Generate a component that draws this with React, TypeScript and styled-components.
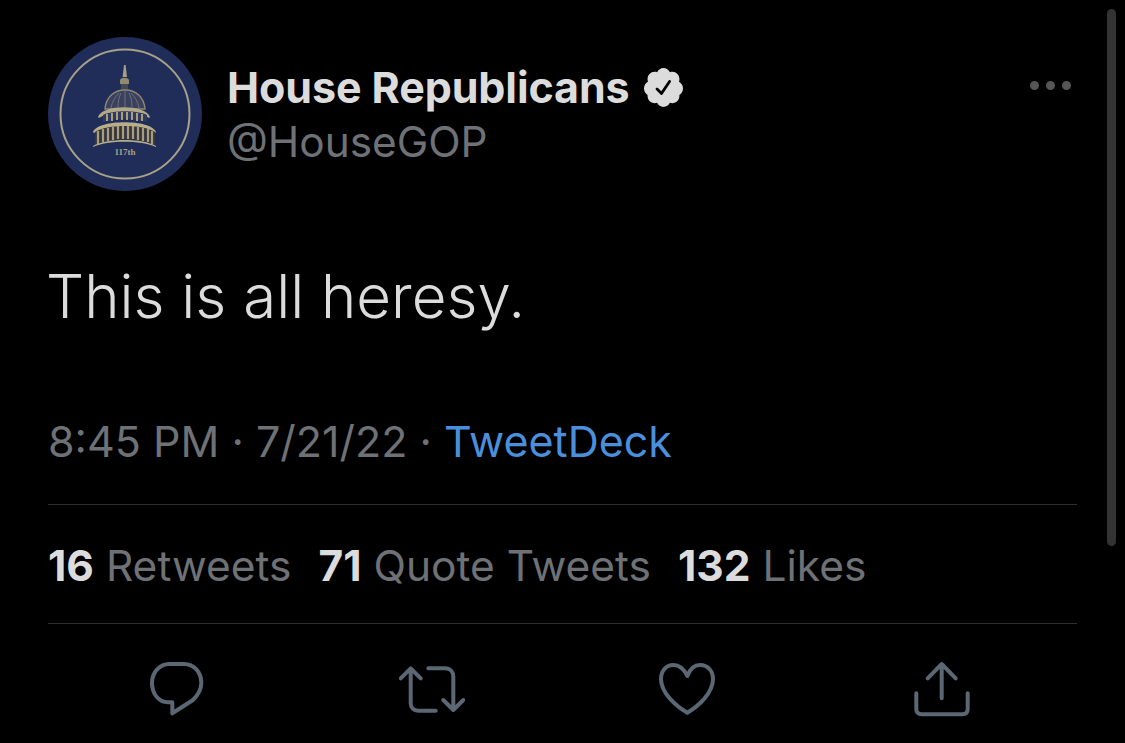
import styled, {createGlobalStyle} from 'styled-components';

const GlobalStyle = createGlobalStyle`
  html, body {
    margin: 0;
    height: 100%;
    background: #000;
    overflow: hidden;
  }
`;

const FONT = `Inter, "Liberation Sans", sans-serif`;

const Avatar = () => (
  <AvatarSvg viewBox="0 0 154 154">
    <circle cx="77" cy="77" r="77" fill="#202d58" />
    <circle cx="77" cy="77" r="64.5" fill="none" stroke="#a8a188" strokeWidth="2" />
    <path d="M76 28h1.600l1.400 12h-4.400z" fill="#a89f84" />
    <path d="M72 43c1-3 8-3 9 0v4h-9z" fill="#94896c" />
    <path d="M73 47h7v6h-7z" fill="#454855" />
    <path d="M57 72c1-12 9-19 20-19s19 7 20 19z" fill="#39415f" stroke="#8f8870" strokeWidth="1.400" />
    <path d="M63 71c1-6 4-11 8-15M70 70c0-6 1-10 3-14M77 70V54M84 70c0-6-1-10-3-14M91 71c-1-6-4-11-8-15" stroke="#6f7076" strokeWidth="1" fill="none" />
    <path d="M50 80c4-13 48-13 52 0l-1 1c-10-7-40-7-50 0z" fill="#b3a988" />
    <path d="M55 78c10-5 34-5 44 0v7c-12-4-32-4-44 0z" fill="#2f3a5c" />
    <path d="M59 77v7M64 76v8M69 75v8M74 75v8M79 75v8M84 75v8M89 76v8M94 77v7" stroke="#a89f80" strokeWidth="2" />
    <path d="M45 95c5-13 58-13 63 0l-1 1c-12-8-49-8-61 0z" fill="#b8ae8a" />
    <path d="M47 95c12-8 48-8 60 0v12c-14-6-46-6-60 0z" fill="#34353f" />
    <path d="M50 94v13M55 92v13M60 91v13M65 90v13M70 89v13M75 89v13M80 89v13M85 89v13M90 90v13M95 91v13M100 92v13M104 94v13" stroke="#a89e7c" strokeWidth="2.200" />
    <path d="M45 109c13-8 50-8 63 0v1c-15-7-48-7-63 0z" fill="#b8ae8a" />
    <AvatarLabel x="77" y="118" textAnchor="middle">117th</AvatarLabel>
  </AvatarSvg>
);

const VerifiedBadge = () => (
  <BadgeSvg viewBox="1.5 1.5 21 21">
    <path d="M22.5 12.5c0-1.58-.875-2.95-2.148-3.6.154-.435.238-.905.238-1.4 0-2.21-1.71-3.998-3.818-3.998-.47 0-.92.084-1.336.25C14.818 2.415 13.51 1.5 12 1.5s-2.816.917-3.437 2.25c-.415-.165-.866-.25-1.336-.25-2.11 0-3.818 1.79-3.818 4 0 .494.083.964.237 1.4-1.272.65-2.147 2.018-2.147 3.6 0 1.495.782 2.798 1.942 3.486-.02.17-.032.34-.032.514 0 2.21 1.708 4 3.818 4 .47 0 .92-.086 1.335-.25.62 1.334 1.926 2.25 3.437 2.25 1.512 0 2.818-.916 3.437-2.25.415.163.865.248 1.336.248 2.11 0 3.818-1.79 3.818-4 0-.174-.012-.344-.033-.513 1.158-.687 1.943-1.99 1.943-3.484zm-6.616-3.334l-4.334 6.5c-.145.217-.382.334-.625.334-.143 0-.288-.04-.416-.126l-.115-.094-2.415-2.415c-.293-.293-.293-.768 0-1.06s.768-.294 1.06 0l1.77 1.767 3.825-5.74c.23-.345.696-.436 1.04-.207.346.23.44.696.21 1.04z" fill="#dcdcdc" />
  </BadgeSvg>
);

const CommentIcon = () => (
  <ActionSvg viewBox="0 0 66 60">
    <path d="M28.300 42.300H24C14 42.300 8 33 8 23 8 12 16 4 25 4H40C50 4 57.300 12 57.300 23 57.300 31 53 36 49 40L28.300 53.300Z" />
  </ActionSvg>
);

const RetweetIcon = () => (
  <ActionSvg viewBox="0 0 66 60">
    <path d="M1.700 18.300 11.700 8.300l10 10M11.700 9v34.300c0 4.500 3 7.400 7.600 7.400h17.400" />
    <path d="M29.300 8.300H46c5 0 8.300 3.400 8.300 8.400V50M44.300 40l10 10 10-10" />
  </ActionSvg>
);

const HeartIcon = () => (
  <ActionSvg viewBox="0 0 66 60">
    <path d="M33.300 16C30 9 25 5 19.300 5 12 5 7 11 7 19 7 33 22 46 33.300 52.700 44.600 46 59 33 59 19 59 11 54 5 46 5 41 5 36 9 33.300 16Z" />
  </ActionSvg>
);

const ShareIcon = () => (
  <ActionSvg viewBox="0 0 66 60">
    <path d="M32.700 38.300V5M18.700 18.300 32.700 4l14 14.300" />
    <path d="M7.300 33.300V49c0 3.500 2 5.300 5.400 5.300h40.600c3.400 0 5.400-1.800 5.400-5.300V33.300" />
  </ActionSvg>
);

const stats = [
  {count: '16', label: 'Retweets'},
  {count: '71', label: 'Quote Tweets'},
  {count: '132', label: 'Likes'},
];

const App = (): JSX.Element => {
  return (
    <Page>
      <GlobalStyle />
      <Header>
        <Avatar />
        <Names>
          <NameRow>
            <DisplayName>House Republicans</DisplayName>
            <VerifiedBadge />
          </NameRow>
          <Handle>@HouseGOP</Handle>
        </Names>
        <MoreButton>
          <Dot />
          <Dot />
          <Dot />
        </MoreButton>
      </Header>
      <Body>This is all heresy.</Body>
      <Meta>
        8:45 PM · 7/21/22 · <SourceLink>TweetDeck</SourceLink>
      </Meta>
      <Stats>
        {stats.map((el) => (
          <Stat key={el.label}>
            <b>{el.count}</b> {el.label}
          </Stat>
        ))}
      </Stats>
      <Actions>
        <CommentIcon />
        <RetweetIcon />
        <HeartIcon />
        <ShareIcon />
      </Actions>
      <ScrollThumb />
    </Page>
  );
};

export default App;

const Page = styled.main`
  position: relative;
  box-sizing: border-box;
  width: 1125px;
  height: 743px;
  padding: 37px 48px 0;
  background: #000;
  font-family: ${FONT};
  overflow: hidden;
`;

const Header = styled.header`
  display: flex;
  align-items: flex-start;
  gap: 25px;
  height: 154px;
`;

const AvatarSvg = styled.svg`
  display: block;
  flex: none;
  width: 154px;
  height: 154px;
`;

const AvatarLabel = styled.text`
  font-family: "Liberation Serif", serif;
  font-size: 9px;
  font-weight: 700;
  fill: #a8a188;
`;

const Names = styled.div`
  flex: 1;
  padding-top: 26px;
`;

const NameRow = styled.div`
  display: flex;
  align-items: center;
  gap: 14px;
  height: 48px;
`;

const DisplayName = styled.span`
  font-size: 43px;
  font-weight: 700;
  letter-spacing: -0.1px;
  color: #dcdcdc;
`;

const BadgeSvg = styled.svg`
  display: block;
  width: 39px;
  height: 39px;
`;

const Handle = styled.div`
  margin-top: 7px;
  font-size: 42.300px;
  line-height: 48px;
  font-weight: 400;
  color: #6e7175;
`;

const MoreButton = styled.div`
  display: flex;
  gap: 7px;
  padding: 44px 6px 0 0;
`;

const Dot = styled.span`
  width: 9px;
  height: 9px;
  border-radius: 50%;
  background: #565656;
`;

const Body = styled.p`
  margin: 69px 0 0 -2px;
  font-size: 60px;
  line-height: 72px;
  font-weight: 300;
  color: #dcdcdc;
`;

const Meta = styled.div`
  margin-top: 85px;
  padding-bottom: 39px;
  font-size: 43px;
  line-height: 48px;
  color: #6e7175;
  border-bottom: 1px solid #2f2f2f;
`;

const SourceLink = styled.span`
  color: #4a8fdc;
`;

const Stats = styled.div`
  display: flex;
  gap: 27px;
  padding: 37px 0 33px;
  border-bottom: 1px solid #2f2f2f;
`;

const Stat = styled.span`
  font-size: 42.500px;
  line-height: 48px;
  color: #6e7175;

  & > b {
    font-weight: 700;
    color: #dcdcdc;
  }
`;

const Actions = styled.div`
  display: grid;
  grid-template-columns: repeat(4, 255px);
  padding-top: 36px;
`;

const ActionSvg = styled.svg`
  display: block;
  width: 66px;
  height: 60px;
  margin-left: 96px;
  fill: none;
  stroke: #5b6773;
  stroke-width: 4;
  stroke-linecap: round;
  stroke-linejoin: round;
`;

const ScrollThumb = styled.div`
  position: absolute;
  top: 9px;
  left: 1107px;
  width: 9px;
  height: 537px;
  border-radius: 5px;
  background: #333;
`;
